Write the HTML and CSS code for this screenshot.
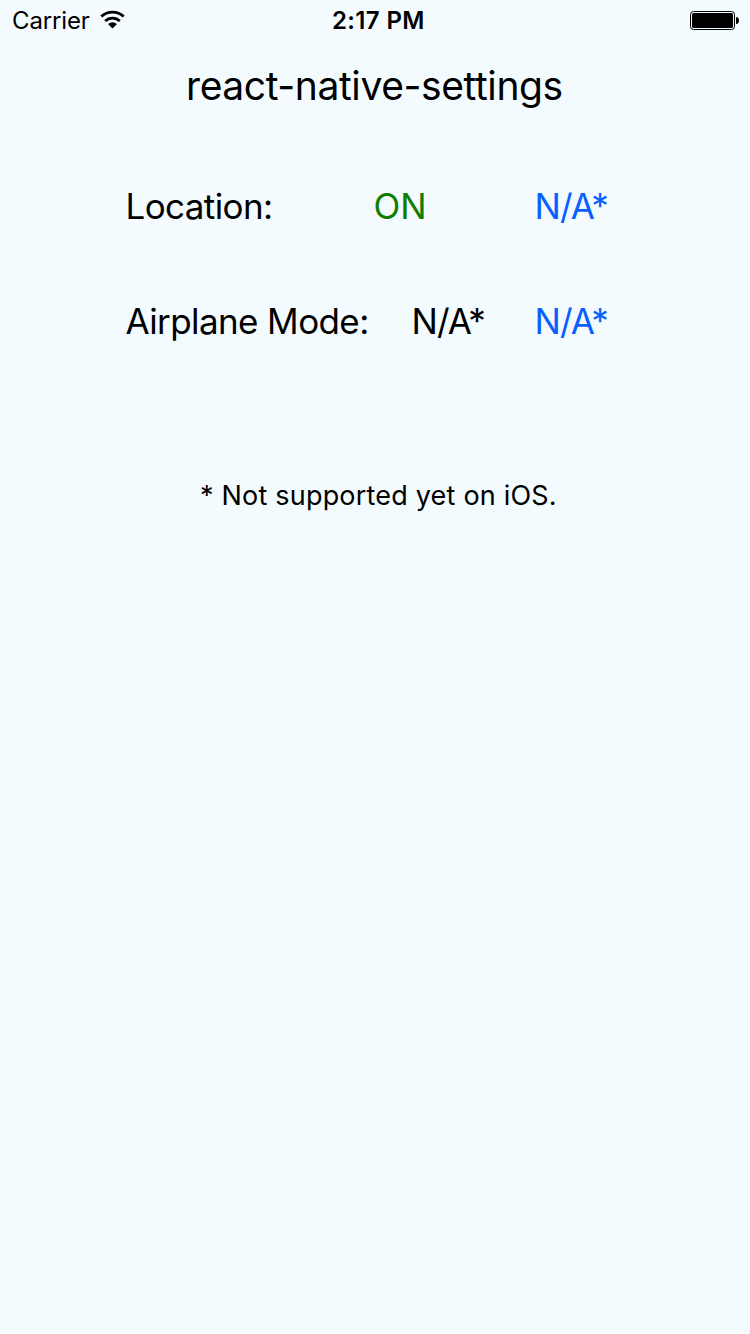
FILE: index.html
```html
<!DOCTYPE html>
<html lang="en">
<head>
<meta charset="utf-8">
<title>react-native-settings</title>
<link rel="stylesheet" href="styles.css">
</head>
<body>
<header class="status">
  <div class="carrier"><span class="carrier-name">Carrier</span>
    <svg class="wifi" width="26" height="20" viewBox="0 0 26 20"><g fill="none" stroke="#000" stroke-width="2.800"><path d="M1.300 6.600A16 16 0 0 1 23.700 6.600"/><path d="M5.200 11A10.500 10.500 0 0 1 19.800 11"/></g><path d="M8 14Q12.500 10.600 17 14L12.500 18.500Z"/></svg>
  </div>
  <div class="clock"><span class="time">2:17 PM</span></div>
  <svg class="battery" width="50" height="20" viewBox="0 0 50 20"><rect x=".5" y=".5" width="44" height="18" rx="3" fill="none" stroke="#000"/><rect x="2" y="2" width="41" height="15" rx="1.500"/><path d="M46 6Q49 6.300 49 9.500T46 13Z"/></svg>
</header>
<main class="content">
  <h1 class="title"><span class="title-text">react-native-settings</span></h1>
  <section class="row"><span class="label location">Location:</span><span class="value on">ON</span><span class="action">N/A*</span></section>
  <section class="row"><span class="label airplane">Airplane Mode:</span><span class="value na">N/A*</span><span class="action">N/A*</span></section>
  <p class="note"><span class="note-text">* Not supported yet on iOS.</span></p>
</main>
</body>
</html>
```
FILE: styles.css
```css
* { box-sizing: border-box; }
body { margin: 0; height: 1334px; background: #f3fbff; color: #000; font-family: Inter, sans-serif; overflow: hidden; }
.status { display: grid; grid-template-columns: 332px 358px 60px; height: 42px; align-items: center; font-size: 24px; line-height: 42px; }
.carrier { display: flex; align-items: center; padding-left: 12px; gap: 10px; letter-spacing: -0.15px; }
.wifi { margin-bottom: 2px; }
.time { font-weight: 600; letter-spacing: 0.35px; }
.content { display: flex; flex-direction: column; }
.title { margin: 20px 0 0; padding-left: 186px; height: 48px; font-size: 39px; line-height: 48px; font-weight: 400; letter-spacing: -0.4px; white-space: nowrap; }
.row { display: grid; grid-template-columns: 248px 161px 100px; margin-top: 71px; padding-left: 125.5px; height: 44px; font-size: 35px; line-height: 44px; letter-spacing: -0.6px; white-space: nowrap; }
.row:nth-of-type(1) { margin-top: 74px; }
.row:nth-of-type(2) { grid-template-columns: 286px 123px 100px; }
.on { color: #107c00; letter-spacing: 0; }
.na, .action { letter-spacing: -0.9px; }
.action { color: #0a60ff; }
.note { margin: 136px 0 0; padding-left: 200px; font-size: 27px; line-height: 34px; letter-spacing: 0.2px; white-space: nowrap; }
```
